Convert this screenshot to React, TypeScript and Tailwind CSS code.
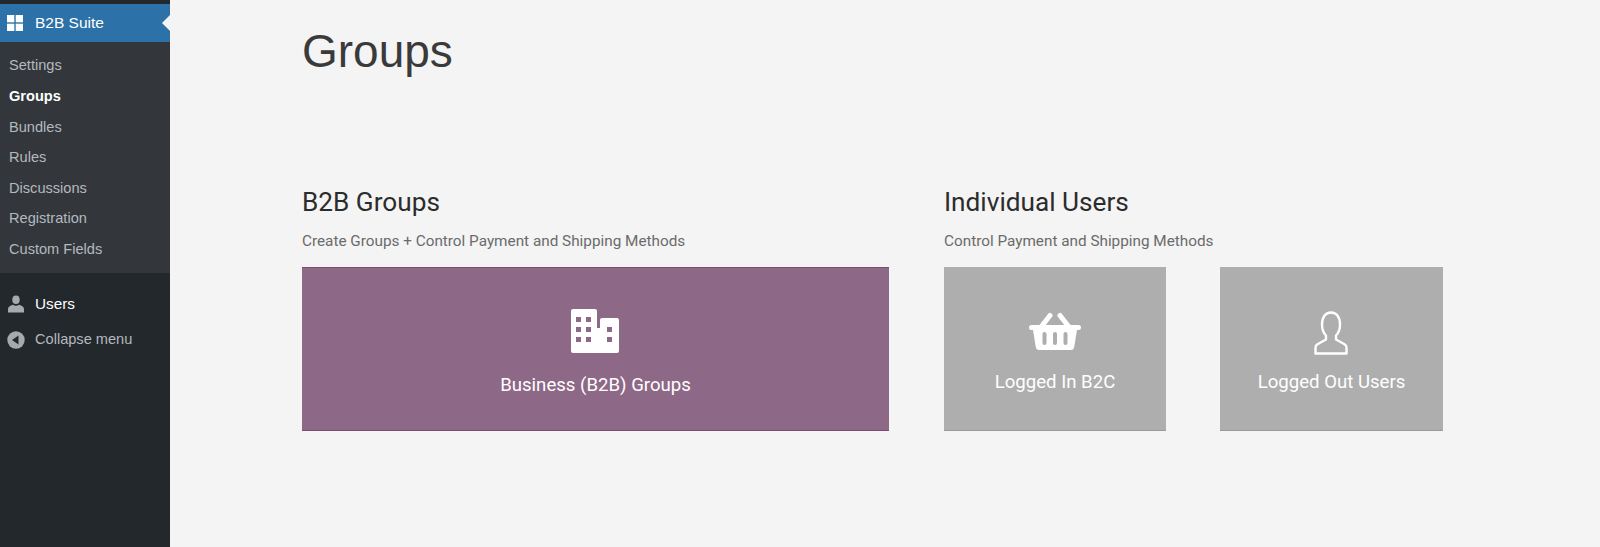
const submenu = ["Settings", "Groups", "Bundles", "Rules", "Discussions", "Registration", "Custom Fields"];

function GridIcon() {
  return (
    <svg width="16" height="16" viewBox="0 0 16 16" fill="#fff">
      <rect x="0" y="0" width="7.3" height="7.3" />
      <rect x="8.7" y="0" width="7.3" height="7.3" />
      <rect x="0" y="8.7" width="7.3" height="7.3" />
      <rect x="8.7" y="8.7" width="7.3" height="7.3" />
    </svg>
  );
}

function UserSmallIcon() {
  return (
    <svg width="18" height="18" viewBox="0 0 18 18" fill="#a7aaad">
      <ellipse cx="9" cy="4.8" rx="3.7" ry="4.3" />
      <path d="M1 17.5v-3.6c0-2 2.5-3.4 4.8-4.1 1.8 1.3 4.6 1.3 6.4 0 2.3.7 4.8 2.1 4.8 4.1v3.6z" />
    </svg>
  );
}

function CollapseIcon() {
  return (
    <svg width="18" height="18" viewBox="0 0 18 18">
      <circle cx="9" cy="9" r="8.7" fill="#a7aaad" />
      <path d="M11.5 4.5v9L5 9z" fill="#23282d" />
    </svg>
  );
}

function BuildingIcon() {
  return (
    <svg width="48" height="44" viewBox="0 0 48 44" className="mr-[2px]">
      <path
        fill="#fff"
        fillRule="evenodd"
        d="M2 0h22a2 2 0 0 1 2 2v17h3v-8a2 2 0 0 1 2-2h15a2 2 0 0 1 2 2v31a2 2 0 0 1-2 2H2a2 2 0 0 1-2-2V2a2 2 0 0 1 2-2zM5 8v5h5V8zm10 0v5h5V8zM5 18v5h5v-5zm10 0v5h5v-5zM5 28v5h5v-5zm10 0v5h5v-5zm21-10v5h5v-5zm0 10v5h5v-5z"
      />
    </svg>
  );
}

function BasketIcon() {
  return (
    <svg width="52" height="38" viewBox="0 0 52 38">
      <path d="M12 15 21 3.500M40 15 31 3.500" stroke="#fff" strokeWidth="5" strokeLinecap="round" fill="none" />
      <path
        fill="#fff"
        fillRule="evenodd"
        d="M2.500 13h47a2.500 2.500 0 0 1 0 5h-1.500l-2.800 17a3.500 3.500 0 0 1-3.500 3H10.300a3.500 3.500 0 0 1-3.500-3L4 18H2.500a2.500 2.500 0 0 1 0-5zM15.500 20a2 2 0 0 0-2 2v9a2 2 0 0 0 4 0v-9a2 2 0 0 0-2-2zm10.500 0a2 2 0 0 0-2 2v9a2 2 0 0 0 4 0v-9a2 2 0 0 0-2-2zm10.500 0a2 2 0 0 0-2 2v9a2 2 0 0 0 4 0v-9a2 2 0 0 0-2-2z"
      />
    </svg>
  );
}

function UserOutlineIcon() {
  return (
    <svg width="34" height="44" viewBox="0 0 34 44" fill="none" stroke="#fff" strokeWidth="2.4" strokeLinejoin="round" className="mr-[2px]">
      <path d="M1.500 42.500V36.500c0-1.500.5-2.500 2-3.300l8.500-4.700v-4c-2.500-2.500-4-6-4-11C8 6 11.500 1.500 17 1.500S26 6 26 13.500c0 5-1.500 8.500-4 11v4l8.500 4.700c1.500.8 2 1.800 2 3.300v6z" />
    </svg>
  );
}

function Tile({ label, icon, className }: { label: string; icon: React.ReactNode; className: string }) {
  return (
    <div className={`flex h-[164px] flex-col items-center text-white ${className}`}>
      {icon}
      <span className="text-[18.600px] leading-[22px]">{label}</span>
    </div>
  );
}

export default function App() {
  return (
    <div className="flex h-[547px] w-[1600px] overflow-hidden bg-[#f4f4f4] font-['Roboto',sans-serif]">
      <aside className="flex w-[170px] shrink-0 flex-col bg-[#23282d] pt-[4px] font-['Liberation_Sans',sans-serif] text-[14.600px]">
        <div className="relative flex h-[38px] items-center bg-[#2c71a8] pl-[7px] text-[15.500px] text-white">
          <GridIcon />
          <span className="ml-[12px]">B2B Suite</span>
          <div className="absolute right-0 top-[11px] h-0 w-0 border-y-[8px] border-r-[8px] border-y-transparent border-r-[#f4f4f4]" />
        </div>
        <div className="flex h-[231px] flex-col bg-[#33373c] pt-[9px] text-[#b4b9be]">
          {submenu.map((item) => (
            <div
              key={item}
              className={`flex h-[30.600px] items-center pl-[9px] ${item === "Groups" ? "font-bold text-white" : ""}`}
            >
              {item}
            </div>
          ))}
        </div>
        <div className="mt-[17px] flex h-[28px] items-center pl-[7px] text-[15.300px] text-white">
          <UserSmallIcon />
          <span className="ml-[10px]">Users</span>
        </div>
        <div className="mt-[8px] flex h-[28px] items-center pl-[7px] text-[#b4b9be]">
          <CollapseIcon />
          <span className="ml-[10px]">Collapse menu</span>
        </div>
      </aside>
      <main className="flex-1 pl-[132px]">
        <h1 className="mt-[23px] font-['Liberation_Sans',sans-serif] text-[46px] leading-[56px] font-normal text-[#3a3a3a]">Groups</h1>
        <div className="mt-[108px] flex">
          <section className="w-[587px]">
            <h2 className="text-[26.200px] leading-[30px] text-[#2c2c2c]">B2B Groups</h2>
            <p className="mt-[15px] text-[15.300px] leading-[18px] text-[#6b6b6b]">Create Groups + Control Payment and Shipping Methods</p>
            <Tile
              label="Business (B2B) Groups"
              className="mt-[17px] gap-[21px] border-y border-[#7a4f72] bg-[#8e6887] pt-[41px]"
              icon={<BuildingIcon />}
            />
          </section>
          <section className="ml-[55px]">
            <h2 className="text-[26.200px] leading-[30px] text-[#2c2c2c]">Individual Users</h2>
            <p className="mt-[15px] text-[15.300px] leading-[18px] text-[#6b6b6b]">Control Payment and Shipping Methods</p>
            <div className="mt-[17px] flex gap-[54px]">
              <Tile
                label="Logged In B2C"
                className="w-[222px] gap-[21px] border-b border-[#999] bg-[#aeaeae] pt-[45px]"
                icon={<BasketIcon />}
              />
              <Tile
                label="Logged Out Users"
                className="w-[223px] gap-[16px] border-b border-[#999] bg-[#aeaeae] pt-[44px]"
                icon={<UserOutlineIcon />}
              />
            </div>
          </section>
        </div>
      </main>
    </div>
  );
}
